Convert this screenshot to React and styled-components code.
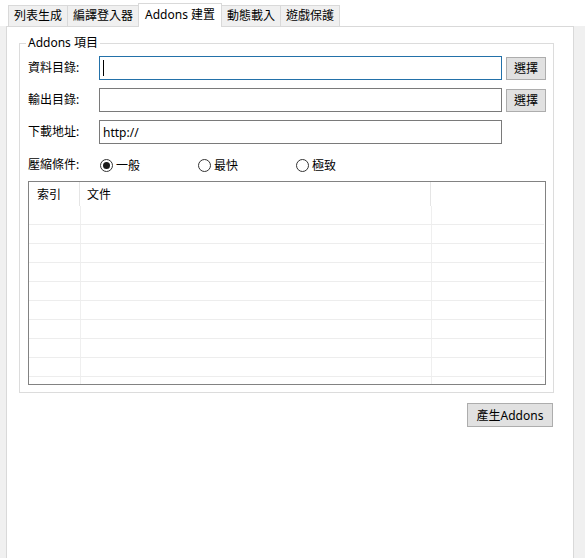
import React from 'react';
import styled, { createGlobalStyle } from 'styled-components';

const GlobalStyle = createGlobalStyle`
  html, body {
    margin: 0;
    padding: 0;
    background: #ffffff;
  }
`;

const Window = styled.div`
  width: 585px;
  height: 558px;
  display: flex;
  flex-direction: column;
  overflow: hidden;
  background: #ffffff;
  font-family: "Noto Sans", "Noto Sans CJK TC", sans-serif;
  font-size: 12px;
  color: #000000;
`;

const TabStrip = styled.div`
  display: flex;
  align-items: flex-end;
  height: 26px;
  padding-left: 8px;
  position: relative;
  z-index: 1;
`;

const Tab = styled.div`
  box-sizing: border-box;
  height: ${(p) => (p.$active ? 24 : 21)}px;
  margin-bottom: ${(p) => (p.$active ? -1 : 0)}px;
  padding: 0 ${(p) => (p.$active ? 6 : 5)}px;
  display: flex;
  align-items: center;
  white-space: nowrap;
  line-height: 1;
  padding-bottom: ${(p) => (p.$active ? 2 : 1)}px;
  background: ${(p) => (p.$active ? '#ffffff' : '#f0f0f0')};
  border: 1px solid #d9d9d9;
  border-bottom: none;
  margin-left: ${(p) => (p.$first ? 0 : -1)}px;
`;

const Frame = styled.div`
  flex: 1;
  display: flex;
  background: #f0f0f0;
  padding: 0 11px 0 6px;
`;

const Panel = styled.div`
  flex: 1;
  display: flex;
  flex-direction: column;
  background: #ffffff;
  border: 1px solid #d9d9d9;
  border-bottom: none;
  padding: 8px 19px 0 12px;
`;

const Group = styled.fieldset`
  margin: 0;
  padding: 0;
  min-width: 0;
  border: 1px solid #dcdcdc;
`;

const Legend = styled.legend`
  margin-left: 6px;
  padding: 0 2px;
  line-height: 16px;
  font-size: 12px;
`;

const GroupBody = styled.div`
  display: flex;
  flex-direction: column;
  padding: 5px 6px 7px 8px;
`;

const FieldRow = styled.div`
  display: flex;
  align-items: center;
  height: 24px;
  margin-bottom: 8px;
`;

const Label = styled.div`
  width: 71px;
  flex: none;
  line-height: 16px;
`;

const TextBox = styled.div`
  box-sizing: border-box;
  width: 403px;
  height: 24px;
  display: flex;
  align-items: center;
  padding-left: 3px;
  background: #ffffff;
  border: 1px solid ${(p) => (p.$focused ? '#2371a9' : '#7a7a7a')};
`;

const Caret = styled.span`
  width: 1px;
  height: 16px;
  background: #000000;
`;

const Button = styled.button`
  box-sizing: border-box;
  height: ${(p) => p.$h || 23}px;
  width: ${(p) => p.$w}px;
  margin: 0;
  padding: 0;
  background: #e1e1e1;
  border: 1px solid #adadad;
  font-family: "Noto Sans", "Noto Sans CJK TC", sans-serif;
  font-size: 12px;
  color: #000000;
`;

const PickButton = styled(Button)`
  margin-left: 4px;
`;

const RadioRow = styled.div`
  display: flex;
  align-items: center;
  height: 16px;
  margin-top: 5px;
`;

const RadioOption = styled.div`
  width: 98px;
  display: flex;
  align-items: center;
  gap: 3px;
  padding-left: 1px;
  box-sizing: border-box;
`;

const RadioCircle = styled.span`
  box-sizing: border-box;
  width: 13px;
  height: 13px;
  border-radius: 50%;
  border: 1px solid #333333;
  display: flex;
  align-items: center;
  justify-content: center;

  &::after {
    content: '';
    width: 7px;
    height: 7px;
    border-radius: 50%;
    background: ${(p) => (p.$checked ? '#1a1a1a' : 'transparent')};
  }
`;

const Table = styled.div`
  box-sizing: border-box;
  width: 518px;
  height: 204px;
  margin-top: 8px;
  border: 1px solid #828282;
  display: flex;
  flex-direction: column;
  overflow: hidden;
`;

const HeadRow = styled.div`
  display: flex;
  height: 24px;
  flex: none;
`;

const HeadCell = styled.div`
  box-sizing: border-box;
  width: ${(p) => (p.$w ? `${p.$w}px` : 'auto')};
  flex: ${(p) => (p.$w ? 'none' : 1)};
  padding: 3px 0 0 ${(p) => p.$pad}px;
  border-right: ${(p) => (p.$last ? 'none' : '1px solid #e5e5e5')};
`;

const Body = styled.div`
  flex: 1;
  overflow: hidden;
  padding-right: 1px;
`;

const Row = styled.div`
  display: flex;
  height: 19px;
  box-sizing: border-box;
  border-bottom: 1px solid #ededed;
`;

const Cell = styled.div`
  box-sizing: border-box;
  width: ${(p) => (p.$w ? `${p.$w}px` : 'auto')};
  flex: ${(p) => (p.$w ? 'none' : 1)};
  border-right: ${(p) => (p.$last ? 'none' : '1px solid #efefef')};
`;

const Footer = styled.div`
  display: flex;
  justify-content: flex-end;
  margin-top: 10px;
  padding-right: 1px;
`;

const tabs = ['列表生成', '編譯登入器', 'Addons 建置', '動態載入', '遊戲保護'];
const levels = ['一般', '最快', '極致'];

export default function App() {
  return (
    <>
      <GlobalStyle />
      <Window>
        <TabStrip>
          {tabs.map((t, i) => (
            <Tab key={t} $first={i === 0} $active={i === 2}>
              {t}
            </Tab>
          ))}
        </TabStrip>
        <Frame>
          <Panel>
            <Group>
              <Legend>Addons 項目</Legend>
              <GroupBody>
                <FieldRow>
                  <Label>資料目錄:</Label>
                  <TextBox $focused>
                    <Caret />
                  </TextBox>
                  <PickButton $w={40}>選擇</PickButton>
                </FieldRow>
                <FieldRow>
                  <Label>輸出目錄:</Label>
                  <TextBox />
                  <PickButton $w={40}>選擇</PickButton>
                </FieldRow>
                <FieldRow>
                  <Label>下載地址:</Label>
                  <TextBox>http://</TextBox>
                </FieldRow>
                <RadioRow>
                  <Label>壓縮條件:</Label>
                  {levels.map((l, i) => (
                    <RadioOption key={l}>
                      <RadioCircle $checked={i === 0} />
                      {l}
                    </RadioOption>
                  ))}
                </RadioRow>
                <Table>
                  <HeadRow>
                    <HeadCell $w={51} $pad={8}>索引</HeadCell>
                    <HeadCell $w={351} $pad={7}>文件</HeadCell>
                    <HeadCell $last />
                  </HeadRow>
                  <Body>
                    {Array.from({ length: 10 }).map((_, i) => (
                      <Row key={i}>
                        <Cell $w={52} />
                        <Cell $w={351} />
                        <Cell $last />
                      </Row>
                    ))}
                  </Body>
                </Table>
              </GroupBody>
            </Group>
            <Footer>
              <Button $w={86} $h={24}>產生Addons</Button>
            </Footer>
          </Panel>
        </Frame>
      </Window>
    </>
  );
}
